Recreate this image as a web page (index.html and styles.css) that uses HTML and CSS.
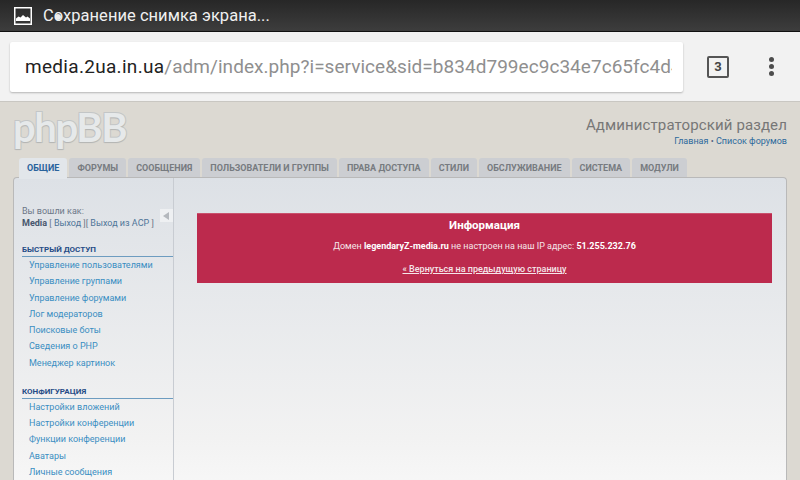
FILE: index.html
```html
<!DOCTYPE html>
<html lang="ru">
<head>
    <meta charset="UTF-8">
    <title>Администраторский раздел</title>
    <link rel="stylesheet" href="styles.css">
</head>
<body>
    <!-- Android status bar -->
    <div class="status-bar">
        <svg class="status-icon" width="18" height="18" viewBox="0 0 18 18">
            <rect x="0.75" y="0.75" width="16.5" height="16.5" fill="none" stroke="#fff" stroke-width="1.5"/>
            <path d="M2 14v-2.5l2.500-2 2 1 2.500-2.500 3 2.500 1.500-1 2.500 2v2.500z" fill="#fff"/>
        </svg>
        <span class="status-text">Сохранение снимка экрана...</span>
        <span class="status-blob"></span>
    </div>

    <!-- Browser toolbar -->
    <div class="toolbar">
        <div class="url-box">
            <div class="url-text"><span class="url-host">media.2ua.in.ua</span>/adm/index.php?i=service&amp;sid=b834d799ec9c34e7c65fc4d4</div>
        </div>
        <div class="tab-count">3</div>
        <div class="menu-dots"><i></i><i></i><i></i></div>
    </div>

    <div class="page">
        <div class="page-header">
            <div class="logo">phpBB</div>
            <div class="page-title">
                <h1>Администраторский раздел</h1>
                <p><a>Главная</a> • <a>Список форумов</a></p>
            </div>
        </div>

        <ul class="tabs">
            <li class="active">Общие</li>
            <li>Форумы</li>
            <li>Сообщения</li>
            <li>Пользователи и группы</li>
            <li>Права доступа</li>
            <li>Стили</li>
            <li>Обслуживание</li>
            <li>Система</li>
            <li>Модули</li>
        </ul>

        <div class="panel">
            <div class="sidebar">
                <span class="collapse"></span>
                <p class="login">Вы вошли как:<br><strong>Media</strong> [ <a>Выход</a> ][ <a>Выход из ACP</a> ]</p>

                <h3>Быстрый доступ</h3>
                <ul class="menu">
                    <li>Управление пользователями</li>
                    <li>Управление группами</li>
                    <li>Управление форумами</li>
                    <li>Лог модераторов</li>
                    <li>Поисковые боты</li>
                    <li>Сведения о PHP</li>
                    <li>Менеджер картинок</li>
                </ul>

                <h3>Конфигурация</h3>
                <ul class="menu">
                    <li>Настройки вложений</li>
                    <li>Настройки конференции</li>
                    <li>Функции конференции</li>
                    <li>Аватары</li>
                    <li>Личные сообщения</li>
                </ul>
            </div>

            <div class="main">
                <div class="error-box">
                    <h2>Информация</h2>
                    <p>Домен <strong>legendaryZ-media.ru</strong> не настроен на наш IP адрес: <strong>51.255.232.76</strong></p>
                    <a class="back-link">« Вернуться на предыдущую страницу</a>
                </div>
            </div>
        </div>
    </div>
</body>
</html>
```

FILE: styles.css
```css
* {
    box-sizing: border-box;
}

html, body {
    margin: 0;
    height: 480px;
    overflow: hidden;
}

body {
    font-family: Roboto, "Liberation Sans", sans-serif;
    background: #dcd9d2;
}

/* Status bar */
.status-bar {
    position: relative;
    display: flex;
    align-items: center;
    height: 32px;
    padding: 0 14px;
    background: linear-gradient(#272727, #3d3d3d);
    border-bottom: 1px solid #111;
}

.status-icon {
    margin-right: 11px;
}

.status-text {
    color: #f0f0f0;
    font-size: 16.5px;
    letter-spacing: 0.03px;
}

.status-blob {
    position: absolute;
    left: 55px;
    top: 14px;
    width: 6px;
    height: 6px;
    border-radius: 50%;
    background: #eee;
}

/* Toolbar */
.toolbar {
    display: flex;
    align-items: center;
    height: 70px;
    padding: 0 26px 0 10px;
    background: #f2f2f2;
    border-bottom: 1px solid #c9c7c2;
}

.url-box {
    flex: none;
    width: 673px;
    height: 50px;
    margin-right: 24px;
    padding: 0 11px 0 15px;
    display: flex;
    align-items: center;
    background: #fff;
    border-radius: 2px;
    box-shadow: 0 1px 2px rgba(0, 0, 0, 0.25);
}

.url-text {
    overflow: hidden;
    white-space: nowrap;
    color: #8f8f8f;
    font-size: 19px;
    letter-spacing: 0.04px;
}

.url-host {
    color: #222;
    letter-spacing: 0.3px;
}

.tab-count {
    width: 22px;
    height: 22px;
    border: 2px solid #555;
    border-radius: 2px;
    color: #444;
    font-size: 13px;
    font-weight: 700;
    line-height: 18px;
    text-align: center;
}

.menu-dots {
    display: flex;
    flex-direction: column;
    gap: 2px;
    margin-left: 40px;
}

.menu-dots i {
    width: 5px;
    height: 5px;
    border-radius: 50%;
    background: #4d4d4d;
}

/* phpBB page */
.page {
    padding: 0 13px;
}

.page-header {
    display: flex;
    justify-content: space-between;
    height: 56px;
}

.logo {
    font-family: Lato, sans-serif;
    font-size: 40px;
    font-weight: 700;
    line-height: 50px;
    letter-spacing: -1.4px;
    color: #e6e9ea;
    -webkit-text-stroke: 2px #c3c6c7;
    paint-order: stroke fill;
    text-shadow: 0 1px 1px #b5b5b3;
}

.page-title {
    text-align: right;
}

.page-title h1 {
    margin: 13px 0 0;
    color: #777;
    font-size: 15px;
    font-weight: 400;
    letter-spacing: 0.12px;
    line-height: 20px;
}

.page-title p {
    margin: 0;
    color: #536482;
    font-size: 9px;
    line-height: 12px;
}

.page-title a {
    color: #2d6a9c;
}

.tabs {
    display: flex;
    gap: 2px;
    height: 19px;
    margin: 0 0 0 6px;
    padding: 0;
    list-style: none;
}

.tabs li {
    padding: 0 8px;
    border-radius: 3px 3px 0 0;
    background: #ccced2;
    color: #777b80;
    font-size: 9px;
    font-weight: 700;
    line-height: 20px;
    text-transform: uppercase;
}

.tabs .active {
    position: relative;
    height: 21px;
    background: #e2e6ea;
    color: #29639c;
}

.panel {
    display: flex;
    height: 320px;
    border: 1px solid #b9b9b9;
    border-bottom: 0;
    border-radius: 4px 4px 0 0;
    background: linear-gradient(#dde1e6, #f2f2f2 260px, #f8f8f8);
}

/* Sidebar */
.sidebar {
    position: relative;
    flex: none;
    width: 160px;
    padding: 27px 0 0 8px;
    border-right: 1px solid #c8ccd2;
}

.collapse {
    position: absolute;
    right: 0;
    top: 31px;
    width: 13px;
    height: 13px;
    background: #eef0f2;
}

.collapse::after {
    content: "";
    position: absolute;
    left: 3px;
    top: 3px;
    border-style: solid;
    border-width: 4px 6px 4px 0;
    border-color: transparent #b4b8bd transparent transparent;
}

.login {
    margin: 0 0 15px;
    color: #6c7787;
    font-size: 9px;
    line-height: 12px;
}

.login strong {
    color: #47566d;
}

.login a {
    color: #4f7598;
}

.sidebar h3 {
    margin: 0;
    padding-bottom: 1px;
    border-bottom: 1px solid #6d9cc0;
    color: #264c86;
    font-size: 8px;
    font-weight: 700;
    line-height: 11px;
    text-transform: uppercase;
}

.menu {
    margin: 0 0 15px;
    padding: 0 0 0 7px;
    list-style: none;
}

.menu li {
    color: #3a8ec2;
    font-size: 9px;
    line-height: 16.25px;
}

/* Main */
.main {
    flex: 1;
    padding: 35px 14px 0 23px;
}

.error-box {
    height: 70px;
    padding-top: 3px;
    background: #bc2a4d;
    border-top: 1px solid #c9506c;
    color: #f5e6ea;
    font-size: 9px;
    text-align: center;
}

.error-box h2 {
    margin: 0 0 7px;
    color: #fff;
    font-size: 11.5px;
    font-weight: 700;
    line-height: 16px;
}

.error-box p {
    margin: 0 0 12px;
    line-height: 12px;
}

.error-box strong {
    color: #fff;
}

.back-link {
    text-decoration: underline;
    font-weight: 500;
}
```
